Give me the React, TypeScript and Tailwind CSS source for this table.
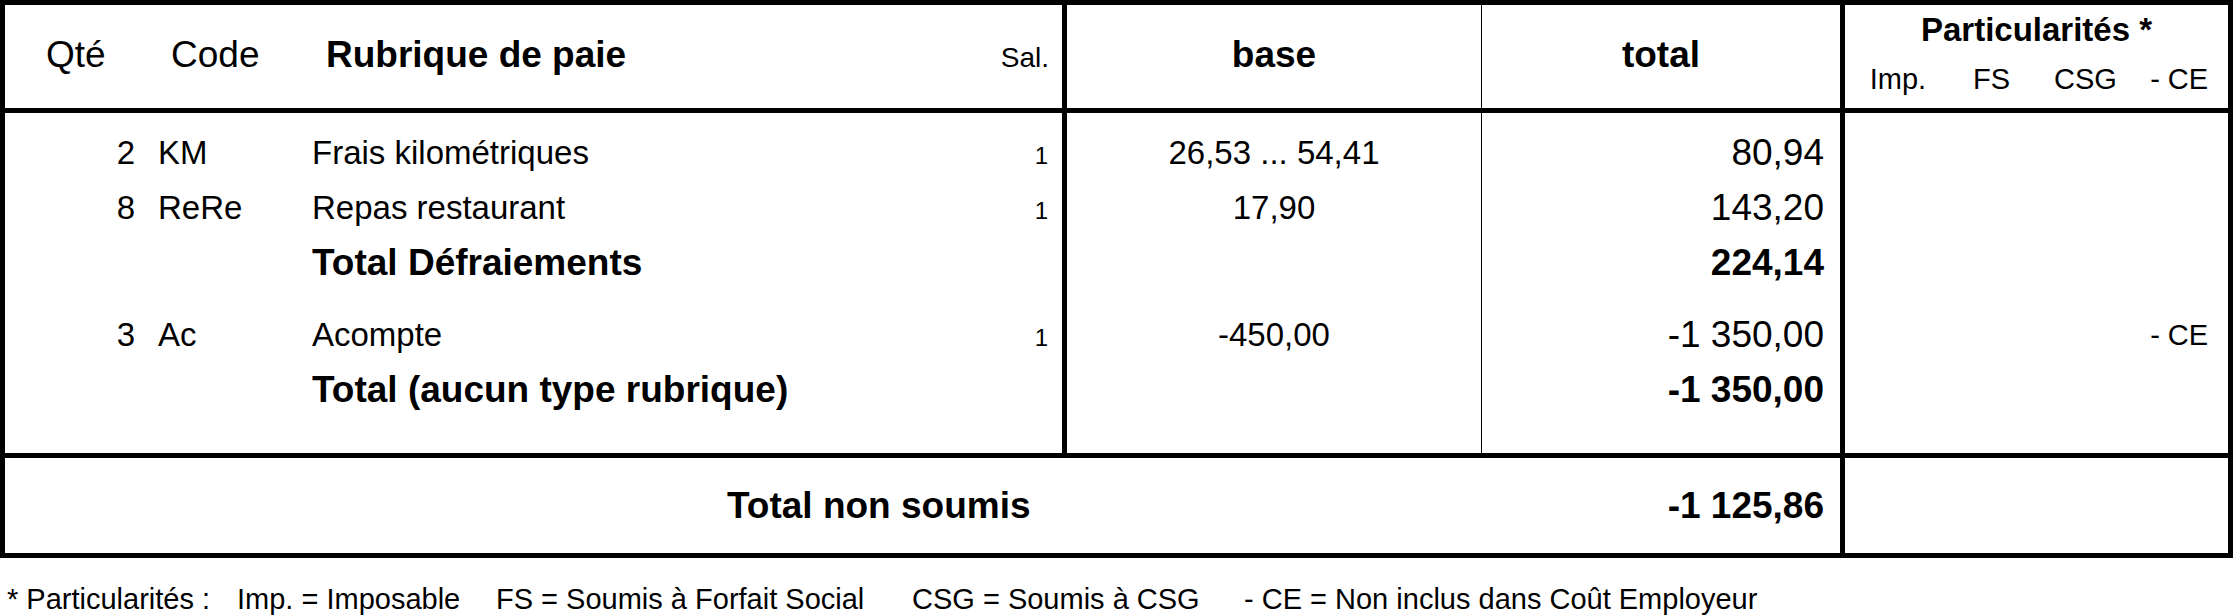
import React from "react";

// Lignes du bulletin : détail des rubriques non soumises
interface Ligne {
  qte?: string;
  code?: string;
  libelle: string;
  sal?: string;
  base?: string;
  total: string;
  ce?: boolean;
  isTotal?: boolean;
  spaceBefore?: boolean;
}

const lignes: Ligne[] = [
  { qte: "2", code: "KM", libelle: "Frais kilométriques", sal: "1", base: "26,53 ... 54,41", total: "80,94" },
  { qte: "8", code: "ReRe", libelle: "Repas restaurant", sal: "1", base: "17,90", total: "143,20" },
  { libelle: "Total Défraiements", total: "224,14", isTotal: true },
  { qte: "3", code: "Ac", libelle: "Acompte", sal: "1", base: "-450,00", total: "-1\u00a0350,00", ce: true, spaceBefore: true },
  { libelle: "Total (aucun type rubrique)", total: "-1\u00a0350,00", isTotal: true },
];

const particularites = ["Imp.", "FS", "CSG", "- CE"];

const App: React.FC = () => {
  return (
    <div className="w-[2234px] h-[616px] bg-white text-black font-['Liberation_Sans',Arial,sans-serif]">
      <div className="w-[2233px] border-[5px] border-black">
        {/* En-tête */}
        <div className="flex h-[108px] border-b-[5px] border-black">
          <div className="w-[1062px] border-r-[5px] border-black pt-[29px]">
            <div className="flex items-baseline leading-[42px]">
              <span className="pl-[41px] w-[166px] text-[37px]">Qté</span>
              <span className="w-[155px] text-[37px]">Code</span>
              <span className="flex-1 text-[37px] font-bold">Rubrique de paie</span>
              <span className="pr-[13px] text-[28px]">Sal.</span>
            </div>
          </div>
          <div className="w-[415px] border-r border-black pt-[29px] text-center text-[37px] font-bold leading-[42px]">
            base
          </div>
          <div className="w-[363px] border-r-[5px] border-black pt-[29px] text-center text-[37px] font-bold leading-[42px]">
            total
          </div>
          <div className="flex-1 flex flex-col pt-[6px]">
            <div className="text-center text-[33px] font-bold leading-[38px]">Particularités *</div>
            <div className="grid grid-cols-4 mt-[13px] pl-[6px] pr-[2px] text-[29px] leading-[34px]">
              {particularites.map((p) => (
                <span key={p} className="text-center">
                  {p}
                </span>
              ))}
            </div>
          </div>
        </div>

        {/* Corps */}
        <div className="flex h-[345px] border-b-[5px] border-black">
          <div className="w-[1062px] border-r-[5px] border-black pt-[12px]">
            {lignes.map((l, i) => (
              <div key={i} className={`flex items-center h-[55px] ${l.spaceBefore ? "mt-[17px]" : ""}`}>
                <div className="flex items-baseline w-full">
                  <span className="w-[130px] text-right text-[33px] leading-[38px]">{l.qte}</span>
                  <span className="w-[177px] pl-[23px] text-[33px] leading-[38px]">{l.code}</span>
                  {l.isTotal ? (
                    <span className="flex-1 text-[37px] font-bold leading-[42px]">{l.libelle}</span>
                  ) : (
                    <span className="flex-1 text-[33px] leading-[38px]">{l.libelle}</span>
                  )}
                  <span className="pr-[14px] text-[24px] leading-[28px]">{l.sal}</span>
                </div>
              </div>
            ))}
          </div>
          <div className="w-[415px] border-r border-black pt-[12px]">
            {lignes.map((l, i) => (
              <div key={i} className={`flex items-center justify-center h-[55px] text-[33px] leading-[38px] whitespace-nowrap ${l.spaceBefore ? "mt-[17px]" : ""}`}>
                {l.base}
              </div>
            ))}
          </div>
          <div className="w-[363px] border-r-[5px] border-black pt-[12px]">
            {lignes.map((l, i) => (
              <div
                key={i}
                className={`flex items-center justify-end h-[55px] pr-[16px] text-[37px] leading-[42px] whitespace-nowrap ${l.isTotal ? "font-bold" : ""} ${l.spaceBefore ? "mt-[17px]" : ""}`}
              >
                {l.total}
              </div>
            ))}
          </div>
          <div className="flex-1 pt-[12px]">
            {lignes.map((l, i) => (
              <div key={i} className={`grid grid-cols-4 items-center h-[55px] pl-[6px] pr-[2px] text-[29px] leading-[34px] ${l.spaceBefore ? "mt-[17px]" : ""}`}>
                <span />
                <span />
                <span />
                <span className="text-center">{l.ce ? "- CE" : ""}</span>
              </div>
            ))}
          </div>
        </div>

        {/* Pied */}
        <div className="flex h-[95px]">
          <div className="w-[1840px] border-r-[5px] border-black flex items-center">
            <span className="pl-[722px] text-[37px] font-bold leading-[42px]">Total non soumis</span>
            <span className="ml-auto pr-[16px] text-[37px] font-bold leading-[42px] whitespace-nowrap">-1&nbsp;125,86</span>
          </div>
          <div className="flex-1" />
        </div>
      </div>

      <div className="flex mt-[24px] pl-[7px] text-[29px] leading-[34px] whitespace-nowrap">
        <span className="w-[230px]">* Particularités :</span>
        <span className="w-[259px]">Imp. = Imposable</span>
        <span className="w-[416px]">FS = Soumis à Forfait Social</span>
        <span className="w-[332px]">CSG = Soumis à CSG</span>
        <span>- CE = Non inclus dans Coût Employeur</span>
      </div>
    </div>
  );
};

export default App;
